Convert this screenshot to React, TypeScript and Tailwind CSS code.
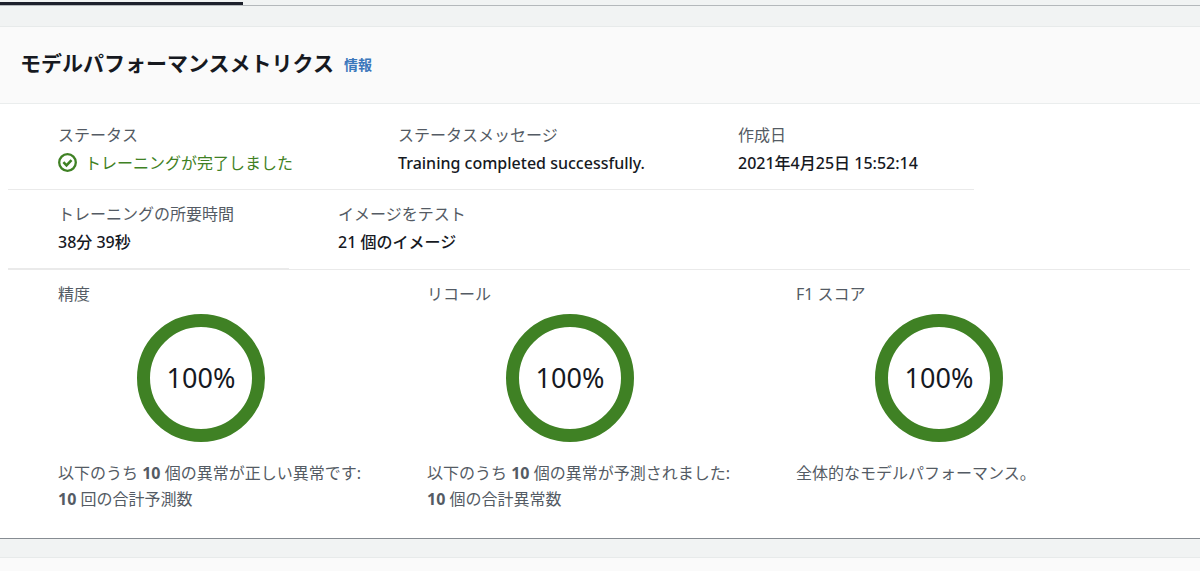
import type { ReactNode } from "react"

type FieldProps = {
    label: string
    children: ReactNode
}

type MetricProps = {
    label: string
    value: number
    children: ReactNode
}

function StatusOkIcon() {
    return (
        <svg viewBox="0 0 20 20" className="h-5 w-5 shrink-0" fill="none" stroke="currentColor" strokeWidth="2.3" aria-hidden="true">
            <circle cx="9.5" cy="9.5" r="8.3" />
            <path d="M5.4 9.2l3.1 3.1 5-5.2" strokeWidth="2.6" />
        </svg>
    )
}

function Field({ label, children }: FieldProps) {
    return (
        <div>
            <dt className="text-[#545b64]">{label}</dt>
            <dd className="mt-1 font-medium text-[#16191f]">{children}</dd>
        </div>
    )
}

function Donut({ value }: { value: number }) {
    const radius = 57.5
    const length = 2 * Math.PI * radius

    return (
        <svg viewBox="0 0 128 128" className="mx-auto mt-2 block h-32 w-32" role="img" aria-label={`${value}%`}>
            <circle
                cx="64"
                cy="64"
                r={radius}
                fill="none"
                stroke="#3f8124"
                strokeWidth="13"
                strokeDasharray={`${(length * value) / 100} ${length}`}
                transform="rotate(-90 64 64)"
            />
            <text x="64" y="74" textAnchor="middle" fill="#16191f" className="text-[27px]">
                {value}%
            </text>
        </svg>
    )
}

function Metric({ label, value, children }: MetricProps) {
    return (
        <div className="pr-[83px]">
            <h3>{label}</h3>
            <Donut value={value} />
            <p className="mt-[18px] leading-[26px] whitespace-nowrap">{children}</p>
        </div>
    )
}

export default function App() {
    return (
        <div className="flex min-h-screen flex-col bg-[#f1f3f3] font-['Noto_Sans','Noto_Sans_CJK_JP',sans-serif] text-base leading-6 text-[#545b64]">
            <div className="h-1.5 border-b border-[#b4b8bb]">
                <div className="h-[5px] w-[243px] border-b-[3px] border-[#1d202b]" />
            </div>

            <section className="mt-5 border-t border-b border-t-[#e7eaea] border-b-[#868c92] bg-white">
                <header className="flex items-center gap-2.5 border-b border-[#eaeded] bg-[#fafafa] px-5 pt-5 pb-6">
                    <h2 className="text-[21px] leading-8 font-bold text-[#16191f]">モデルパフォーマンスメトリクス</h2>
                    <a href="#info" className="pt-1 text-sm leading-5 font-bold text-[#3a77bb]">情報</a>
                </header>

                <div className="pr-2.5 pl-2">
                    <dl className="grid max-w-[966px] grid-cols-[340fr_340fr_236fr] border-b border-[#eaeaea] pt-[19px] pb-3.5 pl-[50px]">
                        <Field label="ステータス">
                            <span className="flex items-center gap-[7px] font-normal text-[#3f8124]">
                                <StatusOkIcon />
                                トレーニングが完了しました
                            </span>
                        </Field>
                        <Field label="ステータスメッセージ">Training completed successfully.</Field>
                        <Field label="作成日">2021年4月25日 15:52:14</Field>
                    </dl>

                    <dl className="grid grid-cols-[280px_1fr] pt-3 pb-3.5 pl-[50px]">
                        <Field label="トレーニングの所要時間">38分 39秒</Field>
                        <Field label="イメージをテスト">21 個のイメージ</Field>
                    </dl>
                    <div className="border-b border-[#eaeaea]">
                        <div className="h-px w-[281px] bg-[#eaeaea]" />
                    </div>

                    <div className="grid grid-cols-3 pt-3 pr-[25px] pb-[26px] pl-[50px]">
                        <Metric label="精度" value={100}>
                            以下のうち <b>10</b> 個の異常が正しい異常です:
                            <br />
                            <b>10</b> 回の合計予測数
                        </Metric>
                        <Metric label="リコール" value={100}>
                            以下のうち <b>10</b> 個の異常が予測されました:
                            <br />
                            <b>10</b> 個の合計異常数
                        </Metric>
                        <Metric label="F1 スコア" value={100}>
                            全体的なモデルパフォーマンス。
                        </Metric>
                    </div>
                </div>
            </section>

            <div className="mt-[18px] flex-1 border-t border-[#e7eaea] bg-[#fafafa]" />
        </div>
    )
}
